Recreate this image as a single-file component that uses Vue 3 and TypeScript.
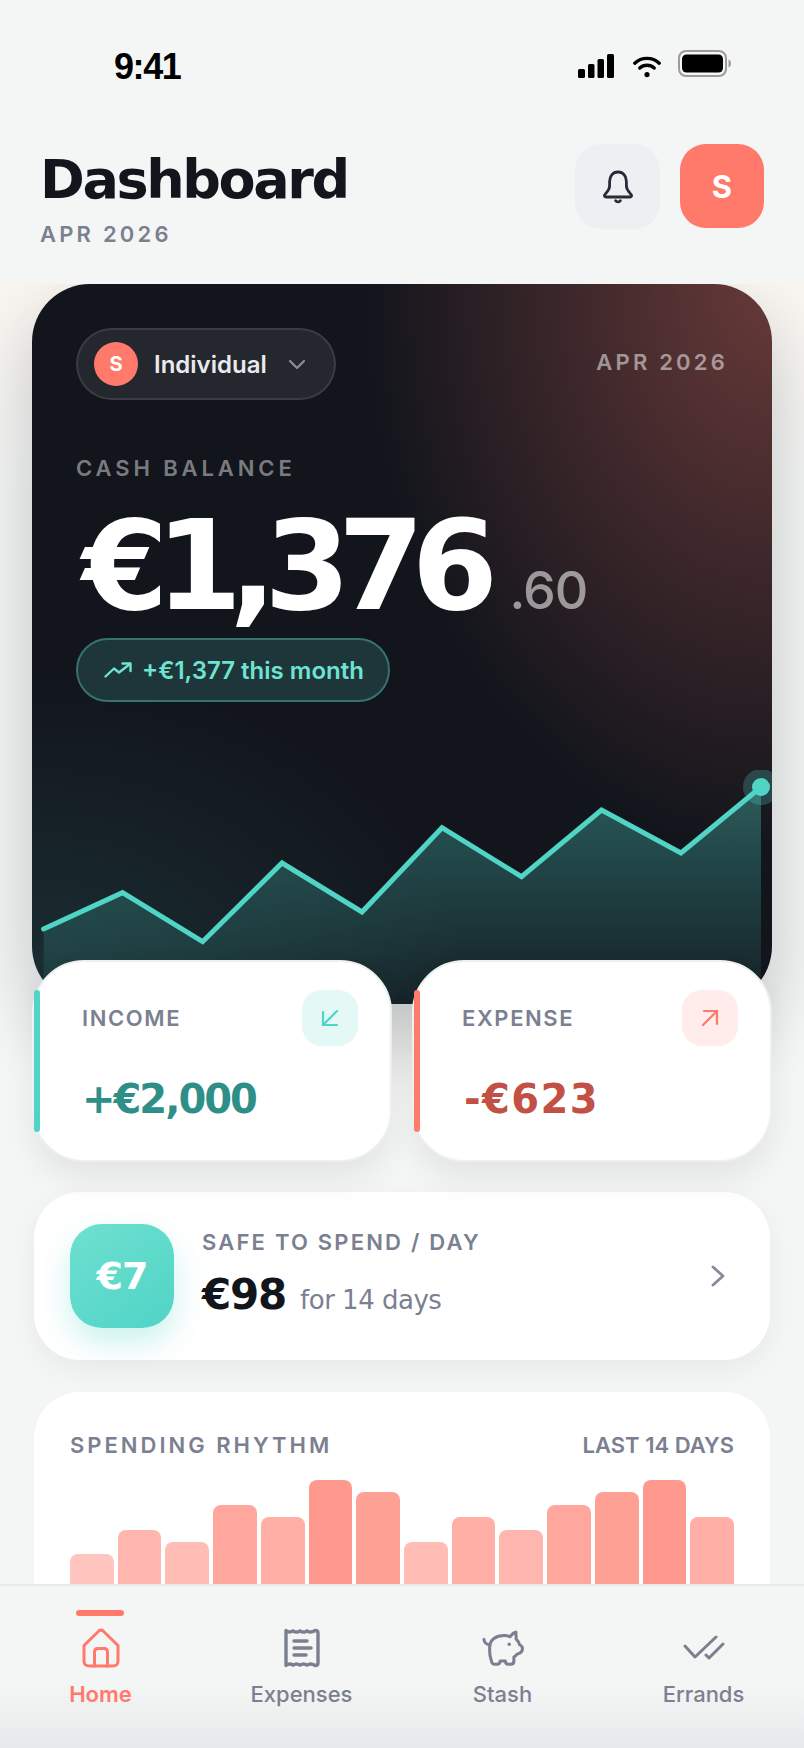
<script setup lang="ts">
const bars: number[] = [46, 70, 58, 95, 83, 120, 108, 58, 83, 70, 95, 108, 120, 83]

const points = '11.6,159 90.5,122.7 170.6,171.7 250,93 330,142 410,57.7 489.5,106.7 569.5,40 649,83 729,17'
const area = `M11.6,159 L${points.split(' ').slice(1).join(' L')} L729,240 L11.6,240 Z`

const barStyle = (h: number) => ({
    height: `${h}px`,
    opacity: 0.235 + 0.535 * (h / 120),
})
</script>

<template>
    <div class="screen">
        <div class="status">
            <span class="time">9:41</span>
            <div class="status-icons">
                <svg width="36" height="24" viewBox="0 0 36 24" fill="#000">
                    <rect x="0" y="15" width="7" height="9" rx="1.5" />
                    <rect x="10" y="10" width="6.5" height="14" rx="1.5" />
                    <rect x="19.5" y="5" width="6.5" height="19" rx="1.5" />
                    <rect x="29" y="0" width="7" height="24" rx="1.5" />
                </svg>
                <svg class="wifi" width="28" height="22" viewBox="0 0 28 22" fill="none" stroke="#000" stroke-width="3.4" stroke-linecap="round">
                    <path d="M1.8 7.2 C8.5 0.8 19.5 0.8 26.2 7.2" />
                    <path d="M6.8 12 C10.8 8.4 17.2 8.4 21.2 12" />
                    <circle cx="14" cy="18.6" r="2.6" fill="#000" stroke="none" />
                </svg>
                <svg width="54" height="28" viewBox="0 0 54 28">
                    <rect x="1" y="1" width="47" height="25" rx="7" fill="none" stroke="#9b9b9b" stroke-width="2" />
                    <rect x="4" y="4.5" width="41" height="18" rx="4.5" fill="#000" />
                    <path d="M50.5 9.5 C52.5 10.5 53 12 53 13.5 C53 15 52.5 16.5 50.5 17.5 Z" fill="#9b9b9b" />
                </svg>
            </div>
        </div>

        <header class="top">
            <div>
                <h1 class="title">Dashboard</h1>
                <div class="month">APR 2026</div>
            </div>
            <div class="top-actions">
                <button class="bell">
                    <svg width="32" height="34" viewBox="0 0 32 34" fill="none" stroke="#262b38" stroke-width="2.8" stroke-linejoin="round" stroke-linecap="round">
                        <path d="M16 2 C10.5 2 7.6 6.5 7.6 11.5 V16 C7.6 20 4.6 22 2.6 25 C2 26.2 2.8 27 4 27 H28 C29.2 27 30 26.2 29.4 25 C27.4 22 24.4 20 24.4 16 V11.5 C24.4 6.5 21.5 2 16 2 Z" />
                        <path d="M13.6 30.6 C14.6 32.4 17.4 32.4 18.4 30.6" />
                    </svg>
                </button>
                <div class="avatar">S</div>
            </div>
        </header>

        <main class="scroll">
            <section class="hero">
                <div class="hero-top">
                    <div class="hero-row">
                        <div class="picker">
                            <span class="picker-dot">S</span>
                            <span class="picker-name">Individual</span>
                            <svg width="18" height="11" viewBox="0 0 18 11" fill="none" stroke="#8d8f96" stroke-width="2.2" stroke-linecap="round" stroke-linejoin="round">
                                <path d="M2 2 L9 9 L16 2" />
                            </svg>
                        </div>
                        <span class="hero-month">APR 2026</span>
                    </div>
                    <div class="cash-label">CASH BALANCE</div>
                    <div class="amount">€1,376<span class="cents">.60</span></div>
                    <div class="delta">
                        <svg width="28" height="16" viewBox="0 0 28 16" fill="none" stroke="#6fe3d2" stroke-width="2.4" stroke-linecap="round" stroke-linejoin="round">
                            <path d="M1.5 14.5 L10 6.5 L15 10.5 L26 2" />
                            <path d="M18.5 1.5 H26.5 V9" />
                        </svg>
                        <span>+€1,377 this month</span>
                    </div>
                </div>
                <svg class="spark" width="740" height="234" viewBox="0 0 740 234">
                    <defs>
                        <linearGradient id="sparkFill" x1="0" y1="0" x2="0" y2="1">
                            <stop offset="0" stop-color="#4fd4c6" stop-opacity="0.36" />
                            <stop offset="1" stop-color="#4fd4c6" stop-opacity="0.05" />
                        </linearGradient>
                    </defs>
                    <path :d="area" fill="url(#sparkFill)" />
                    <polyline :points="points" fill="none" stroke="#4fd4c6" stroke-width="5" stroke-linecap="round" />
                    <circle cx="729" cy="17" r="18" fill="#4fd4c6" opacity="0.25" />
                    <circle cx="729" cy="17" r="9" fill="#4fd4c6" />
                </svg>
            </section>

            <div class="pair">
                <article class="stat">
                    <span class="stat-bar teal"></span>
                    <div class="stat-head">
                        <span class="stat-label">INCOME</span>
                        <span class="stat-icon teal-soft">
                            <svg width="20" height="20" viewBox="0 0 20 20" fill="none" stroke="#4fd4c6" stroke-width="2.2" stroke-linecap="round" stroke-linejoin="round">
                                <path d="M17 3 L3 17" />
                                <path d="M3 4 V17 H17" />
                            </svg>
                        </span>
                    </div>
                    <div class="stat-value income">+€2,000</div>
                </article>
                <article class="stat">
                    <span class="stat-bar coral"></span>
                    <div class="stat-head">
                        <span class="stat-label">EXPENSE</span>
                        <span class="stat-icon coral-soft">
                            <svg width="20" height="20" viewBox="0 0 20 20" fill="none" stroke="#ff7a6b" stroke-width="2.2" stroke-linecap="round" stroke-linejoin="round">
                                <path d="M3 17 L17 3" />
                                <path d="M4 3 H17 V16" />
                            </svg>
                        </span>
                    </div>
                    <div class="stat-value expense">-€623</div>
                </article>
            </div>

            <article class="safe">
                <div class="safe-tile">€7</div>
                <div class="safe-body">
                    <div class="safe-label">SAFE TO SPEND / DAY</div>
                    <div class="safe-line">
                        <span class="safe-amount">€98</span>
                        <span class="safe-days">for 14 days</span>
                    </div>
                </div>
                <svg class="safe-arrow" width="16" height="24" viewBox="0 0 16 24" fill="none" stroke="#858a99" stroke-width="2.8" stroke-linecap="round" stroke-linejoin="round">
                    <path d="M3 3 L13 12 L3 21" />
                </svg>
            </article>

            <article class="rhythm">
                <div class="rhythm-head">
                    <span class="rhythm-title">SPENDING RHYTHM</span>
                    <span class="rhythm-range">LAST 14 DAYS</span>
                </div>
                <div class="rhythm-bars">
                    <div v-for="(h, i) in bars" :key="i" class="rhythm-bar" :style="barStyle(h)"></div>
                </div>
            </article>
        </main>

        <nav class="tabs">
            <div class="tab active">
                <span class="tab-mark"></span>
                <svg width="40" height="40" viewBox="0 0 40 40" fill="none" stroke="#ff7a6b" stroke-width="3" stroke-linejoin="round" stroke-linecap="round">
                    <path d="M3 17.5 L17.6 3.2 C19 2 21 2 22.4 3.2 L37 17.5 V33 C37 36 35 38 32 38 H8 C5 38 3 36 3 33 Z" />
                    <path d="M13.5 38 V24 C13.5 21.8 15 20.5 17 20.5 H23 C25 20.5 26.5 21.8 26.5 24 V38" />
                </svg>
                <span>Home</span>
            </div>
            <div class="tab">
                <svg width="40" height="40" viewBox="0 0 40 40" fill="none" stroke="#7b8091" stroke-width="3.4" stroke-linejoin="round" stroke-linecap="round">
                    <path d="M4 2.5 C6.5 4.5 8.5 4.5 11 2.8 C13.5 4.5 15.5 4.5 18 2.8 C20.5 4.5 22.5 4.5 25 2.8 C27.5 4.5 30 4.5 33 2.5 C35 2.5 36 3.5 36 5 V35 C36 36.5 35 37.5 33 37.5 C30 35.5 27.5 35.5 25 37.2 C22.5 35.5 20.5 35.5 18 37.2 C15.5 35.5 13.5 35.5 11 37.2 C8.5 35.5 6.5 35.5 4 37.5 Z" />
                    <path d="M12 13 H25" />
                    <path d="M12 20 H29" />
                    <path d="M12 27 H24" />
                </svg>
                <span>Expenses</span>
            </div>
            <div class="tab">
                <svg width="42" height="40" viewBox="0 0 44 40" fill="none" stroke="#7b8091" stroke-width="3.2" stroke-linejoin="round" stroke-linecap="round">
                    <path d="M2 11 C2.5 15 5 16.5 8.5 16.5" />
                    <path d="M8 19 C8 11 15 7 23 7 C25.5 7 27.5 7.3 29.5 8.2 C31 5.6 33 3.8 35.5 3.4 L35.8 10.6 C37.8 12.5 39 14.6 39.4 16.6 C41 17.4 42.4 18.4 42.4 20.4 C42.4 23.4 40.6 25.4 37 26.2 C35.8 27.6 34.6 28.6 33.4 29.4 V33.5 C33.4 36 32 37 30 37 H27.5 C25.6 37 24.5 35.8 24.4 33.6 H19 C19 35.8 17.6 37 15.6 37 H13 C11.6 37 10.6 36 10.2 34.8 L8.4 28 C8 25.5 8 22 8 19 Z" />
                    <circle cx="28.5" cy="16" r="1.8" fill="#7b8091" stroke="none" />
                </svg>
                <span>Stash</span>
            </div>
            <div class="tab">
                <svg width="42" height="40" viewBox="0 0 42 40" fill="none" stroke="#7b8091" stroke-width="3" stroke-linejoin="round" stroke-linecap="round">
                    <path d="M2 18 L12 29 L33 9" />
                    <path d="M23 27 L26 30 L40 16" />
                </svg>
                <span>Errands</span>
            </div>
        </nav>
    </div>
</template>

<style scoped>
.screen {
    position: relative;
    width: 804px;
    height: 1748px;
    overflow: hidden;
    background: #f4f6f5;
    font-family: Inter, "Liberation Sans", sans-serif;
    color: #12151c;
}

.status {
    height: 144px;
    box-sizing: border-box;
    padding: 50px 72px 0 114px;
    display: flex;
    justify-content: space-between;
    align-items: flex-start;
}

.time {
    font-family: "Liberation Sans", sans-serif;
    font-size: 36px;
    font-weight: 700;
    line-height: 34px;
    letter-spacing: -1.4px;
    color: #000;
}

.status-icons {
    display: flex;
    align-items: flex-end;
    gap: 18px;
    height: 28px;
}

.wifi {
    margin: 0 -1px 0 1px;
}

.top {
    height: 140px;
    box-sizing: border-box;
    padding: 0 40px 0 40px;
    display: flex;
    justify-content: space-between;
    align-items: flex-start;
}

.title {
    margin: 4px 0 0;
    font-family: "DejaVu Sans", sans-serif;
    font-size: 54px;
    font-weight: 700;
    line-height: 64px;
    letter-spacing: -2.4px;
    color: #12151c;
}

.month {
    margin-top: 9px;
    font-size: 22px;
    font-weight: 600;
    line-height: 26px;
    letter-spacing: 3.2px;
    color: #7b8091;
}

.top-actions {
    display: flex;
    gap: 20px;
}

.bell {
    width: 85px;
    height: 85px;
    border: none;
    padding: 0;
    border-radius: 26px;
    background: #eeeff2;
    display: flex;
    align-items: center;
    justify-content: center;
}

.avatar {
    width: 84px;
    height: 84px;
    border-radius: 26px;
    background: #ff7a6b;
    color: #fff;
    font-size: 31px;
    font-weight: 700;
    display: flex;
    align-items: center;
    justify-content: center;
}

.scroll {
    height: 1464px;
    overflow: hidden;
    padding: 0 32px;
    background: linear-gradient(180deg, #f9f5f0 0, #f4f6f5 200px);
}

.hero {
    width: 740px;
    height: 720px;
    border-radius: 58px;
    overflow: hidden;
    background:
        radial-gradient(410px 570px at 100% 0, rgba(255, 122, 107, 0.36), rgba(255, 122, 107, 0) 100%),
        radial-gradient(440px 330px at 0 100%, rgba(79, 212, 198, 0.14), rgba(79, 212, 198, 0) 100%),
        #12151c;
    box-shadow: 0 30px 70px rgba(18, 21, 28, 0.22);
    color: #fff;
    display: flex;
    flex-direction: column;
    justify-content: space-between;
}

.hero-top {
    padding: 44px 44px 0;
}

.hero-row {
    display: flex;
    justify-content: space-between;
    align-items: center;
}

.picker {
    width: 260px;
    height: 72px;
    box-sizing: border-box;
    border: 2px solid rgba(255, 255, 255, 0.1);
    border-radius: 36px;
    background: rgba(255, 255, 255, 0.08);
    padding-left: 16px;
    display: flex;
    align-items: center;
}

.picker-dot {
    width: 44px;
    height: 44px;
    border-radius: 50%;
    background: #ff7a6b;
    color: #fff;
    font-size: 20px;
    font-weight: 700;
    display: flex;
    align-items: center;
    justify-content: center;
}

.picker-name {
    margin: 0 21px 0 16px;
    font-size: 24px;
    font-weight: 600;
    color: #e9eaec;
}

.hero-month {
    margin-top: -4px;
    font-size: 22px;
    font-weight: 600;
    letter-spacing: 3.2px;
    color: rgba(255, 255, 255, 0.5);
}

.cash-label {
    margin-top: 55px;
    font-size: 22px;
    font-weight: 600;
    line-height: 26px;
    letter-spacing: 3.9px;
    color: rgba(255, 255, 255, 0.45);
}

.amount {
    margin: 53px 0 0 6px;
    font-family: "DejaVu Sans", sans-serif;
    font-size: 124px;
    font-weight: 700;
    line-height: 64px;
    letter-spacing: -12.5px;
    color: #fff;
    white-space: nowrap;
}

.cents {
    margin-left: 24px;
    font-family: Inter, sans-serif;
    font-size: 52px;
    font-weight: 500;
    line-height: 0;
    letter-spacing: -1px;
    color: rgba(255, 255, 255, 0.55);
}

.delta {
    margin-top: 40px;
    width: 314px;
    height: 64px;
    box-sizing: border-box;
    border: 2px solid #35736f;
    border-radius: 32px;
    background: #1e3539;
    padding-left: 26px;
    display: flex;
    align-items: center;
    gap: 10px;
    font-size: 24px;
    font-weight: 600;
    color: #6fe3d2;
    white-space: nowrap;
}

.spark {
    display: block;
    flex: none;
}

.pair {
    position: relative;
    margin-top: -44px;
    display: grid;
    grid-template-columns: 1fr 1fr;
    gap: 20px;
}

.stat {
    position: relative;
    height: 202px;
    box-sizing: border-box;
    border: 2px solid #eeefef;
    border-radius: 52px;
    background: #fff;
    padding: 28px 32px 0 48px;
    box-shadow: 0 16px 32px rgba(18, 21, 28, 0.07);
}

.stat-bar {
    position: absolute;
    left: 0;
    top: 28px;
    width: 6px;
    height: 142px;
    border-radius: 3px;
}

.teal {
    background: #4fd4c6;
}

.coral {
    background: #ff7a6b;
}

.stat-head {
    display: flex;
    justify-content: space-between;
    align-items: center;
}

.stat-label {
    font-size: 22px;
    font-weight: 600;
    letter-spacing: 1.6px;
    color: #7b8091;
}

.stat-icon {
    width: 56px;
    height: 56px;
    border-radius: 20px;
    display: flex;
    align-items: center;
    justify-content: center;
}

.teal-soft {
    background: #e4f8f5;
}

.coral-soft {
    background: #ffeceb;
}

.stat-value {
    margin: 28px 0 0;
    font-family: "DejaVu Sans", sans-serif;
    font-size: 40px;
    font-weight: 700;
    line-height: 50px;
    letter-spacing: -2px;
}

.income {
    color: #2e8f88;
}

.expense {
    margin-left: 2px;
    letter-spacing: 1.4px;
    color: #c25045;
}

.safe {
    margin: 30px 2px 0;
    height: 168px;
    box-sizing: border-box;
    border-radius: 46px;
    background: #fff;
    padding: 0 44px 0 36px;
    display: flex;
    align-items: center;
    box-shadow: 0 10px 30px rgba(18, 21, 28, 0.05);
}

.safe-tile {
    width: 104px;
    height: 104px;
    border-radius: 32px;
    background: linear-gradient(145deg, #6fe0d0, #4fd4c6);
    box-shadow: 0 14px 30px rgba(79, 212, 198, 0.3);
    color: #fff;
    font-family: "DejaVu Sans", sans-serif;
    font-size: 38px;
    font-weight: 700;
    letter-spacing: -1px;
    display: flex;
    align-items: center;
    justify-content: center;
}

.safe-body {
    flex: 1;
    margin: 0 0 3px 28px;
}

.safe-label {
    font-size: 22px;
    font-weight: 600;
    line-height: 26px;
    letter-spacing: 2.2px;
    color: #7b8091;
}

.safe-line {
    margin-top: 15px;
    display: flex;
    align-items: baseline;
    gap: 14px;
}

.safe-amount {
    font-family: "DejaVu Sans", sans-serif;
    font-size: 42px;
    font-weight: 700;
    line-height: 50px;
    letter-spacing: -1.2px;
    color: #12151c;
}

.safe-days {
    font-family: "DejaVu Sans", sans-serif;
    font-size: 26px;
    letter-spacing: -0.5px;
    color: #7b8091;
}

.rhythm {
    margin: 32px 2px 0;
    height: 300px;
    box-sizing: border-box;
    border-radius: 46px;
    background: #fff;
    padding: 40px 36px 0;
}

.rhythm-head {
    display: flex;
    justify-content: space-between;
    align-items: center;
    line-height: 26px;
    color: #7b8091;
    font-weight: 600;
}

.rhythm-title {
    font-size: 22px;
    letter-spacing: 3px;
}

.rhythm-range {
    font-size: 22px;
    letter-spacing: 0;
}

.rhythm-bars {
    margin-top: 22px;
    height: 120px;
    display: flex;
    align-items: flex-end;
    gap: 4px;
}

.rhythm-bar {
    flex: 1;
    border-radius: 8px 8px 0 0;
    background: #ff7a6b;
}

.tabs {
    position: absolute;
    left: 0;
    right: 0;
    bottom: 0;
    height: 164px;
    box-sizing: border-box;
    border-top: 2px solid #e8e9e9;
    background: linear-gradient(180deg, #f4f5f5 60%, #e8e9ea 100%);
    display: grid;
    grid-template-columns: repeat(4, 1fr);
}

.tab {
    position: relative;
    padding-top: 42px;
    display: flex;
    flex-direction: column;
    align-items: center;
    gap: 13px;
    font-size: 22px;
    font-weight: 500;
    line-height: 26px;
    color: #7b8091;
}

.tab.active {
    color: #ff7a6b;
    font-weight: 600;
}

.tab-mark {
    position: absolute;
    top: 24px;
    left: 76px;
    width: 48px;
    height: 6px;
    border-radius: 3px;
    background: #ff7a6b;
}
</style>
